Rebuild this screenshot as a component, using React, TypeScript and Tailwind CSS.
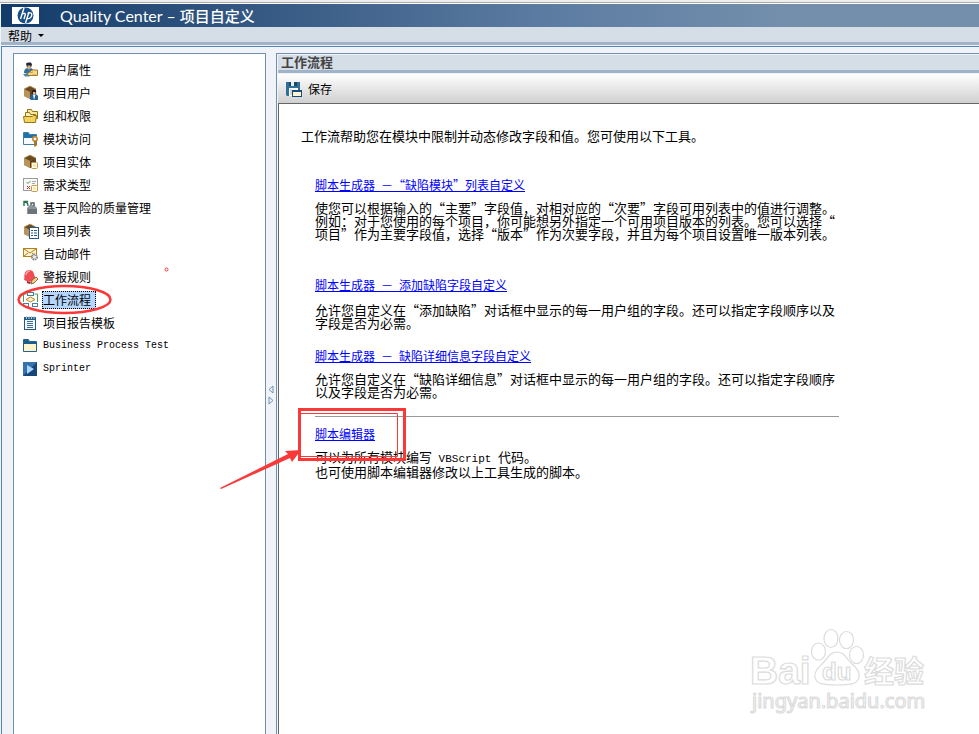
import React, { ReactNode } from 'react'

/* brown box shared by the project icons */
const Box = () => (
  <>
    <path d="M1 4l6-3 6 3v7l-6 3-6-3z" fill="#a47d48" />
    <path d="M1 4l6-3 6 3-6 3z" fill="#6b4a22" />
    <path d="M1 4l6 3v7l-6-3z" fill="#b8935c" />
    <path d="M7 7l6-3v7l-6 3z" fill="#5d431f" />
    <path d="M1 4l6-3 6 3" fill="none" stroke="#cfab74" strokeWidth=".8" />
  </>
)

const YellowTag = () => (
  <>
    <rect x="8.5" y="8.5" width="6" height="6" rx="1" fill="#fffdf2" stroke="#c39a45" />
    <rect x="10" y="10" width="3" height="3" fill="#ffe9a8" />
  </>
)

const items: { label: string; latin?: boolean; active?: boolean; icon: ReactNode }[] = [
  {
    label: '用户属性',
    icon: (
      <>
        <path d="M3 1.5L5 .5h3l1 2-1 3H4z" fill="#1d2736" />
        <path d="M4.5 3.5h3V7h-3z" fill="#e0b07a" />
        <path d="M1 11c0-3 1-4 3-5l2 1.5L8 6c1 .5 2 1 2 2.5L5 12z" fill="#2f6fa3" />
        <path d="M4 12l5-4h5.5v5.5H6z" fill="#f6d98a" stroke="#9a6c17" strokeWidth=".9" />
        <path d="M0 12h4l3 2.5H2z" fill="#4a83b0" />
        <path d="M7 11l3-1M9 13h4" stroke="#b98a34" strokeWidth=".8" />
      </>
    ),
  },
  {
    label: '项目用户',
    icon: (
      <>
        <Box />
        <circle cx="11" cy="7" r="2.3" fill="#2c2019" />
        <path d="M10 7h2.5v2.5H10z" fill="#e4b27c" />
        <path d="M7.5 15v-4l2-2h3.5l2 2v4z" fill="#24639a" />
        <path d="M10 9.5h2.5L11 15z" fill="#fff" />
      </>
    ),
  },
  {
    label: '组和权限',
    icon: (
      <g stroke="#94760f">
        <path d="M4.5 8.5v-7h4l1 2h5v7h-2" fill="#f9e7a0" />
        <path d="M2.5 12V4.5h4l1 2h5V12" fill="#fff2bd" />
        <path d="M1.5 14.5l-1-6h9l1-1h3l-1 7z" fill="#f3d25e" />
      </g>
    ),
  },
  {
    label: '模块访问',
    icon: (
      <>
        <path d="M.5 13.5v-12h5l1 2h7v10z" fill="#f7fbfd" stroke="#3d7fa8" />
        <path d="M1 2h4.5l1 2H13v3H1z" fill="#2271a6" />
        <circle cx="12" cy="8" r="2.2" fill="#fff" stroke="#c98d35" strokeWidth="1.7" />
        <path d="M12 10v5.5m0-2h2" stroke="#a96e21" strokeWidth="1.8" />
      </>
    ),
  },
  { label: '项目实体', icon: <><Box /><YellowTag /></> },
  {
    label: '需求类型',
    icon: (
      <>
        <rect x=".5" y="1.5" width="14" height="12" fill="#fafafa" stroke="#9a9a9a" />
        <path d="M3.5 5L5 6.5 7.5 4" fill="none" stroke="#419b44" />
        <path d="M4 9l3 3m0-3l-3 3" stroke="#c52731" />
        <path d="M9 4.5h4M9 6.5h3" stroke="#aaa" />
        <YellowTag />
      </>
    ),
  },
  {
    label: '基于风险的质量管理',
    icon: (
      <>
        <path d="M4 8l3-3h4l3 3v6H4z" fill="#8d959b" />
        <path d="M8 5V3h3v3" fill="none" stroke="#596066" strokeWidth="1.5" />
        <path d="M5 9h9v5H5z" fill="#6c747b" />
        <path d="M1 6V1.5h4M1.5 2C4 2 5 3 5 6" fill="none" stroke="#23754c" strokeWidth="1.4" />
      </>
    ),
  },
  {
    label: '项目列表',
    icon: (
      <>
        <Box />
        <rect x="6.5" y="4.5" width="9" height="11" fill="#fff" stroke="#245b8a" />
        <path d="M8 7.5h2m1 0h3M8 10h2m1 0h3M8 12.5h2m1 0h3" stroke="#245b8a" />
      </>
    ),
  },
  {
    label: '自动邮件',
    icon: (
      <>
        <rect x=".5" y="2.5" width="13" height="8" fill="#fff4d1" stroke="#b8801b" />
        <path d="M1 3l6 4 6-4M1 10l4-3m4 0l4 3" fill="none" stroke="#b8801b" />
        <circle cx="11.5" cy="11" r="2.5" fill="#eee" stroke="#888" strokeWidth="2" strokeDasharray="1.5 .6" />
      </>
    ),
  },
  {
    label: '警报规则',
    icon: (
      <>
        <path d="M1 11c1-2-.5-5 1.5-8s7-2.5 8 .5 1 5 3 6.5c-3 3-9 3-12.5 1z" fill="#f04a54" />
        <path d="M3 6c0-2 2-4 4-4" stroke="#f9a5a8" fill="none" strokeWidth="1.5" />
        <path d="M4 12l4 1-1 2-3-1z" fill="#a92530" />
        <path d="M8 15l1-4 4-3 2 2-4 4z" fill="#f3cf8d" stroke="#795126" strokeWidth=".8" />
      </>
    ),
  },
  {
    label: '工作流程',
    active: true,
    icon: (
      <>
        <g fill="#fff" stroke="#4780a9">
          <rect x="4.5" y=".5" width="6" height="3" />
          <rect x=".5" y="11.5" width="5" height="3" />
          <rect x="9.5" y="11.5" width="5" height="3" />
        </g>
        <path d="M3 7.5L7.5 5 12 7.5 7.5 10z" fill="#fff1c7" stroke="#bb8929" />
        <path d="M3.5 2H.5v8m11-8h3v8" fill="none" stroke="#4b9c5b" />
      </>
    ),
  },
  {
    label: '项目报告模板',
    icon: (
      <>
        <rect x="1" y="2" width="12" height="13" fill="#245b82" />
        <rect x="2" y="5" width="10" height="9" fill="#f1f6fa" />
        <path d="M4 6.5h6M4 8.5h6M4 10.5h6M4 12.5h6" stroke="#3c6d92" />
        <path d="M3.5 1v3M6 1v3M8.5 1v3M11 1v3" stroke="#b5cbda" />
      </>
    ),
  },
  {
    label: 'Business Process Test',
    latin: true,
    icon: (
      <>
        <path d="M.5 13.5v-12h5l1 2h7v10z" fill="#fff4cc" stroke="#255f8b" />
        <path d="M1 2h4.5l1 2H13v2H1z" fill="#1b5d8d" />
      </>
    ),
  },
  {
    label: 'Sprinter',
    latin: true,
    icon: (
      <>
        <rect x="0" y="1" width="14" height="14" fill="#3672ae" />
        <path d="M0 15L14 1v14z" fill="#164679" />
        <path d="M4 4l7 4-7 5z" fill="#a9d5ff" />
      </>
    ),
  },
]

const tools = [
  {
    title: <>脚本生成器&ensp;－“缺陷模块”列表自定义</>,
    lines: [
      '使您可以根据输入的“主要”字段值，对相对应的“次要”字段可用列表中的值进行调整。',
      '例如：对于您使用的每个项目，你可能想另外指定一个可用项目版本的列表。您可以选择“',
      '项目”作为主要字段值，选择“版本”作为次要字段，并且为每个项目设置唯一版本列表。',
    ],
    section: 'mb-[38px]',
    body: 'mt-2.5',
  },
  {
    title: <>脚本生成器&ensp;－&ensp;添加缺陷字段自定义</>,
    lines: [
      '允许您自定义在“添加缺陷”对话框中显示的每一用户组的字段。还可以指定字段顺序以及',
      '字段是否为必需。',
    ],
    section: 'mb-5',
    body: 'mt-3',
  },
  {
    title: <>脚本生成器&ensp;－&ensp;缺陷详细信息字段自定义</>,
    lines: [
      '允许您自定义在“缺陷详细信息”对话框中显示的每一用户组的字段。还可以指定字段顺序',
      '以及字段是否为必需。',
    ],
    section: 'mb-[18px]',
    body: 'mt-2.5',
  },
]

/* red pen marks drawn over the page */
const Marks = () => (
  <svg viewBox="0 0 420 500" className="pointer-events-none absolute left-0 top-0 h-[500px] w-[420px]" fill="none" stroke="#fb3838" aria-hidden="true">
    <ellipse cx="64.5" cy="299.5" rx="46" ry="13.5" strokeWidth="2.5" />
    <circle cx="166.5" cy="269.5" r="1.5" />
    <rect x="299.5" y="409.5" width="105" height="50" strokeWidth="3" />
    <path d="M301 413.5h96.5V456.5H301" />
    <path d="M220 488l68-34-3-3 16-1-9 12-2-4-69 31z" fill="#fb3838" stroke="none" />
  </svg>
)

const Watermark = () => (
  <svg viewBox="0 0 190 95" className="pointer-events-none absolute left-[750px] top-[625px] h-[95px] w-[190px]" fill="#fff" stroke="#dcdcdc" strokeWidth="1.2" aria-hidden="true">
    <ellipse cx="81" cy="13.5" rx="7" ry="9" />
    <ellipse cx="96.5" cy="15" rx="7" ry="8.5" />
    <ellipse cx="68.5" cy="26.5" rx="7" ry="8.5" />
    <ellipse cx="106.5" cy="30" rx="7" ry="8.5" />
    <path d="M87 27c7 0 9 6 14 11 5 4 9 8 8 14-1 7-8 8-22 8s-21-1-22-8c-1-6 4-10 8-14 5-5 7-11 14-11z" />
    <text x="0" y="59" fontFamily="Liberation Sans" fontWeight="700" fontSize="39">Bai</text>
    <text x="72" y="55" fontFamily="Liberation Sans" fontWeight="700" fontSize="24">du</text>
    <text x="114" y="57" fontFamily="Noto Sans CJK SC" fontWeight="700" fontSize="30">经验</text>
    <text x="2" y="83" fontFamily="Noto Sans" fontSize="20">jingyan.baidu.com</text>
  </svg>
)

const App = () => {
  return (
    <div className="relative flex min-h-screen flex-col overflow-hidden bg-[#f0f4f8] font-['Noto_Sans_CJK_SC',sans-serif] text-black">
      {/* title bar */}
      <div className="h-1 border-b border-white bg-[#eee] shadow-[inset_0_-1px_0_#aaa]" />
      <header className="ml-px flex h-[23px] items-center bg-linear-to-r from-[#123b69] via-[#5b7ba1] via-55% to-[#738fac] to-80% pl-[11px] text-white">
        <svg viewBox="0 0 27 17" className="h-[17px] w-[27px]" aria-label="hp">
          <rect width="27" height="17" fill="#fff" />
          <circle cx="13.5" cy="8.5" r="8" fill="#174f86" />
          <path d="M12 1L8.5 12m1-4.5c3-2 4.5-1 3.5 1l-1 3.5M17 5l-3.5 11m2-9.5c4-1.5 5 0 4 2.5s-2 3-5 2.5" fill="none" stroke="#fff" strokeWidth="1.4" />
        </svg>
        <h1 className="ml-[21px] font-['Lato','Noto_Sans_CJK_SC',sans-serif] text-base leading-none">
          Quality Center – <span className="text-[15px] font-medium">项目自定义</span>
        </h1>
      </header>

      {/* menu */}
      <nav className="ml-px flex h-[18px] items-center border-b-3 border-[#9fb4c8] bg-[#d5dde6] pl-[7px] pt-0.5">
        <button className="flex items-center gap-1.5 text-xs leading-none">
          帮助
          <svg viewBox="0 0 6 3" className="h-[3px] w-1.5"><path d="M0 0h6L3 3z" /></svg>
        </button>
      </nav>

      <div className="ml-px mt-px flex grow border-l border-t border-[#5484ae] pl-[11px] pt-1.5">
        {/* sidebar */}
        <aside className="w-[253px] shrink-0 border border-b-0 border-[#7290ad] bg-white pl-[9px] pt-1">
          {items.map((item) => (
            <button key={item.label} className="flex h-[23px] w-full items-center gap-1 text-left">
              <svg viewBox="0 0 16 16" className="size-4 shrink-0" aria-hidden="true">{item.icon}</svg>
              {item.active ? (
                <span className="-ml-px border border-dotted border-black bg-[#b5d7ff] pr-1 text-xs">{item.label}</span>
              ) : item.latin ? (
                <span className="font-['Liberation_Mono',monospace] text-[10px]">{item.label}</span>
              ) : (
                <span className="text-xs">{item.label}</span>
              )}
            </button>
          ))}
        </aside>

        {/* splitter */}
        <div className="flex w-2.5 shrink-0 items-start justify-center pt-[332px]">
          <svg viewBox="0 0 6 20" className="h-5 w-1.5" fill="#f0f4f8" stroke="#7290ad">
            <path d="M5 1v7L1 4.5zM1 12v7l4-3.5z" />
          </svg>
        </div>

        {/* content */}
        <main className="flex grow flex-col border-l border-t border-[#7290ad] pl-px pt-px">
          <h2 className="h-[18px] border-b-3 border-[#9fb4c8] bg-[#d5dde6] pl-[3px] text-[13px] leading-[14px] font-bold text-[#444]">
            工作流程
          </h2>
          <div className="mt-px flex h-[29px] items-center bg-linear-to-b from-white to-[#d0d0d0] pl-2">
            <button className="flex items-center gap-1.5 text-xs">
              <svg viewBox="0 0 16 16" className="size-4" aria-hidden="true">
                <path d="M0 1h14v14H1l-1-1z" fill="#2f7196" />
                <path d="M3 1h8v4H3z" fill="#1b4a66" />
                <path d="M5 1h3v4H5z" fill="#e4eff5" />
                <path d="M3 7h9v8H3z" fill="#fff" />
                <path d="M4 9h2M4 11h2M4 13h2" stroke="#9ab" />
                <rect x="6.5" y="9.5" width="9" height="6" fill="#fff5d1" stroke="#194b79" />
                <path d="M6 10h10" stroke="#194b79" strokeWidth="2" />
              </svg>
              保存
            </button>
          </div>

          <div className="grow border-l border-t border-[#666] bg-white pl-[22px] pt-[25px] text-[13px] leading-[13px] whitespace-nowrap">
            <p>工作流帮助您在模块中限制并动态修改字段和值。您可使用以下工具。</p>
            <div className="mt-9 w-[538px] pl-3.5">
              {tools.map((tool, i) => (
                <section key={i} className={tool.section}>
                  <a href="#" className="text-xs leading-[13px] text-[#00f] underline">{tool.title}</a>
                  <div className={tool.body}>
                    {tool.lines.map((line) => <p key={line}>{line}</p>)}
                  </div>
                </section>
              ))}
              <hr className="border-[#999]" />
              <section className="mt-2.5">
                <a href="#" className="text-xs leading-[13px] text-[#00f] underline">脚本编辑器</a>
                <div className="mt-2.5">
                  <p className="flex items-baseline">
                    可以为所有模块编写
                    <span className="font-['Liberation_Mono',monospace] text-[11px] leading-none whitespace-pre"> VBScript </span>
                    代码。
                  </p>
                  <p>也可使用脚本编辑器修改以上工具生成的脚本。</p>
                </div>
              </section>
            </div>
          </div>
        </main>
      </div>

      <Marks />
      <Watermark />
    </div>
  )
}

export default App
